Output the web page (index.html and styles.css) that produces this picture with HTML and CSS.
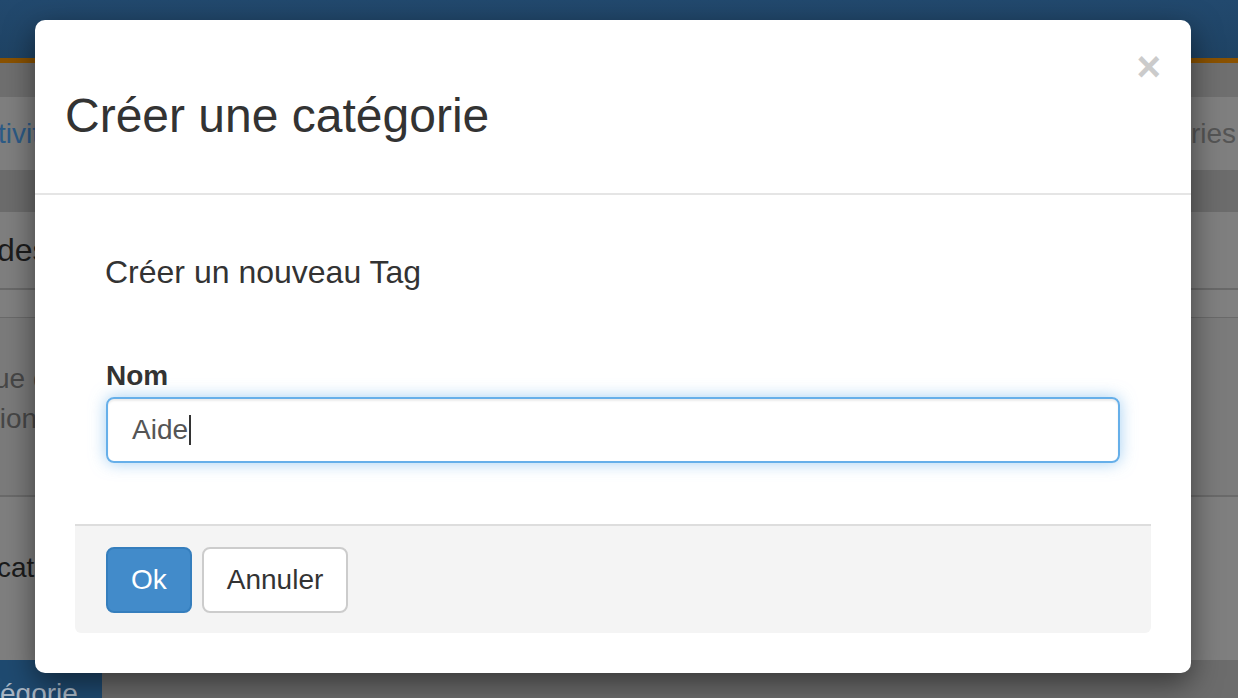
FILE: index.html
```html
<!DOCTYPE html>
<html lang="fr">
<head>
<meta charset="utf-8">
<title>Créer une catégorie</title>
<link rel="stylesheet" href="styles.css">
</head>
<body>
<div class="page">
  <header class="navbar"></header>
  <div class="accent"></div>
  <div class="subbar"></div>
  <nav class="tabs">
    <span class="tab tab-left">tivités</span>
    <span class="tab tab-right">Catégories</span>
  </nav>
  <div class="spacer"></div>
  <section class="panel">
    <div class="panel-heading">des</div>
    <div class="panel-sub"></div>
    <div class="panel-text">
      <p>ue ch</p>
      <p>tion</p>
    </div>
    <div class="panel-row">catég</div>
  </section>
  <div class="bottom">
    <span class="btn-create">égorie</span>
  </div>

  <div class="modal">
    <div class="modal-header">
      <button class="close" type="button">×</button>
      <h3 class="modal-title">Créer une catégorie</h3>
    </div>
    <div class="modal-body">
      <div class="form-panel">
        <div class="form-inner">
          <h4 class="form-heading">Créer un nouveau Tag</h4>
          <label class="form-label">Nom</label>
          <div class="form-control">Aide<span class="caret"></span></div>
        </div>
        <div class="form-footer">
          <button class="btn btn-primary" type="button">Ok</button>
          <button class="btn btn-default" type="button">Annuler</button>
        </div>
      </div>
    </div>
  </div>
</div>
</body>
</html>
```
FILE: styles.css
```css
* { box-sizing: border-box; }

html, body {
  margin: 0;
  padding: 0;
  width: 1238px;
  height: 698px;
  overflow: hidden;
  font-family: "Liberation Sans", Arial, sans-serif;
}

.page {
  position: relative;
  width: 1238px;
  height: 698px;
  background: #6c6c6c;
  overflow: hidden;
}

.navbar {
  height: 58px;
  background: linear-gradient(#22496e, #1f4364);
}

.accent {
  height: 5px;
  background: #8a5200;
}

.subbar {
  height: 34px;
  background: #6f6f6f;
}

.tabs {
  height: 73px;
  background: #7f7f7f;
  display: flex;
  align-items: center;
  justify-content: space-between;
  font-size: 28px;
}

.tab-left {
  color: #2d5b86;
  margin-left: -2px;
}

.tab-right {
  color: #555555;
  margin-right: 2px;
}

.spacer {
  height: 42px;
  background: #6c6c6c;
}

.panel {
  background: #7f7f7f;
}

.panel-heading {
  height: 76px;
  font-size: 32px;
  line-height: 76px;
  color: #1c1c1c;
  margin-left: -3px;
  white-space: nowrap;
}

.panel-sub {
  height: 30px;
  border-top: 2px solid #696969;
  border-bottom: 1px solid #6a6a6a;
  background: #808080;
}

.panel-text {
  height: 179px;
  padding-top: 41px;
  background: #7b7b7b;
  border-bottom: 2px solid #6a6a6a;
  font-size: 28px;
  line-height: 40px;
  color: #474747;
  white-space: nowrap;
}

.panel-text p {
  margin: 0 0 0 -6px;
}

.panel-text p + p {
  margin-left: -8px;
}

.panel-row {
  height: 163px;
  padding-top: 51px;
  font-size: 28px;
  line-height: 40px;
  color: #1b1b1b;
  margin-left: -3px;
  white-space: nowrap;
}

.bottom {
  height: 38px;
  display: flex;
}

.btn-create {
  width: 102px;
  background: #1f4a70;
  color: #a9b6c4;
  font-size: 28px;
  line-height: 40px;
  padding-top: 14px;
  white-space: nowrap;
  overflow: hidden;
}

/* Modal */
.modal {
  position: absolute;
  left: 35px;
  top: 20px;
  width: 1156px;
  background: #ffffff;
  border-radius: 10px;
  box-shadow: 0 10px 30px rgba(0, 0, 0, 0.5);
  color: #333333;
}

.modal-header {
  padding: 30px;
  border-bottom: 2px solid #e5e5e5;
}

.close {
  float: right;
  margin-top: -4px;
  padding: 0;
  border: 0;
  background: transparent;
  font-family: "Liberation Sans", Arial, sans-serif;
  font-size: 42px;
  font-weight: bold;
  line-height: 1;
  color: #cbcbcb;
  cursor: pointer;
}

.modal-title {
  margin: 40px 0 20px;
  font-size: 48px;
  font-weight: normal;
  line-height: 1.1;
}

.modal-body {
  padding: 40px;
}

.form-inner {
  padding: 19px 31px 61px;
}

.form-heading {
  margin: 0 0 0 -1px;
  font-size: 32px;
  font-weight: normal;
  line-height: 36px;
}

.form-label {
  display: block;
  margin-top: 66px;
  margin-bottom: 1px;
  font-size: 28px;
  font-weight: bold;
  line-height: 40px;
}

.form-control {
  display: flex;
  align-items: center;
  height: 66px;
  padding: 0 24px;
  border: 2px solid #66afe9;
  border-radius: 8px;
  font-size: 28px;
  color: #555555;
  box-shadow: inset 0 2px 2px rgba(0, 0, 0, 0.075), 0 0 16px rgba(102, 175, 233, 0.6);
}

.caret {
  display: inline-block;
  width: 2px;
  height: 30px;
  margin-left: 1px;
  background: #333333;
}

.form-footer {
  display: flex;
  gap: 10px;
  padding: 21px 31px 20px;
  background: #f4f4f4;
  border-top: 2px solid #dddddd;
  border-radius: 0 0 6px 6px;
}

.btn {
  height: 66px;
  padding: 0 23px;
  border: 2px solid transparent;
  border-radius: 8px;
  font-family: "Liberation Sans", Arial, sans-serif;
  font-size: 28px;
  line-height: 62px;
  cursor: pointer;
}

.btn-primary {
  background: #428bca;
  border-color: #357ebd;
  color: #ffffff;
}

.btn-default {
  background: #ffffff;
  border-color: #cccccc;
  color: #333333;
}
```
